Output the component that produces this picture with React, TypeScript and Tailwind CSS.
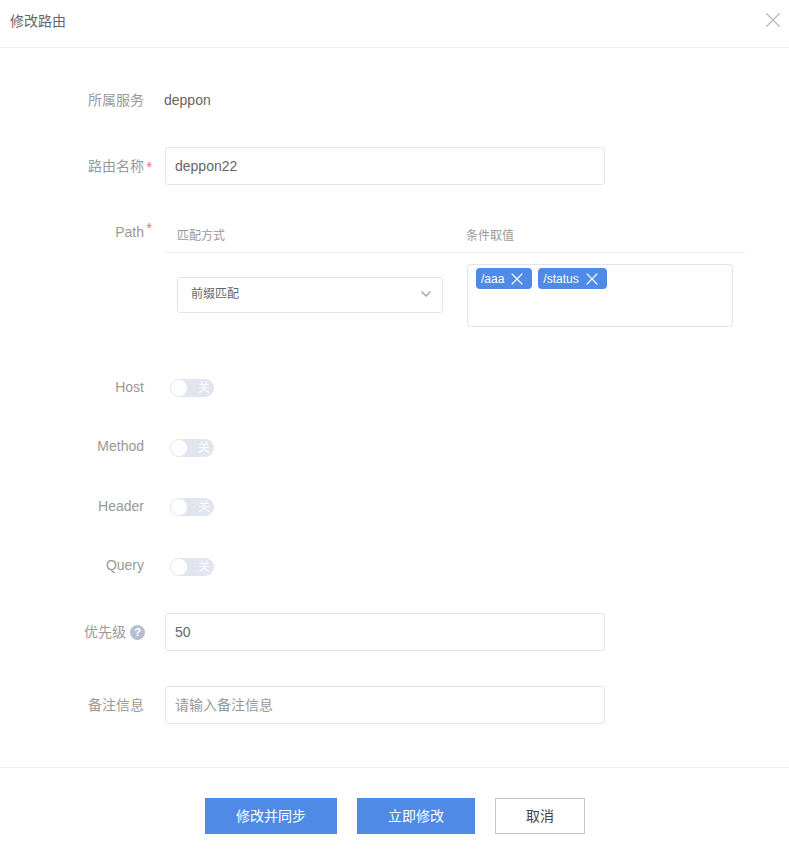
import { ChevronDown, X } from "lucide-react";
import type { ReactNode } from "react";

const font = "font-['Liberation_Sans','Noto_Sans_CJK_SC',sans-serif]";

function FormRow({
  label,
  className,
  labelClassName,
  children,
}: {
  label: ReactNode;
  className: string;
  labelClassName?: string;
  children: ReactNode;
}) {
  return (
    <div className={`flex ${className}`}>
      <div
        className={`relative flex w-[144px] shrink-0 items-center justify-end text-sm text-[#999] ${labelClassName ?? ""}`}
      >
        {label}
      </div>
      {children}
    </div>
  );
}

function Required({ className }: { className: string }) {
  return <span className={`absolute text-sm text-[#f56c6c] ${className}`}>*</span>;
}

function TextField({ value, placeholder }: { value?: string; placeholder?: string }) {
  return (
    <input
      readOnly
      value={value ?? ""}
      placeholder={placeholder}
      className="ml-[21px] h-[38px] w-[440px] rounded-[3px] border border-[#e1e5ee] bg-white px-[9px] text-sm text-[#666] outline-none placeholder:text-[#999]"
    />
  );
}

function Toggle() {
  return (
    <div className="relative ml-[26px] flex h-[18px] w-[44px] items-center justify-end rounded-full bg-[#e1e5ef] pr-[4px] text-xs leading-none text-white">
      <span className="absolute left-[1px] top-[1px] size-[16px] rounded-full bg-white" />
      关
    </div>
  );
}

function Tag({ text }: { text: string }) {
  return (
    <span className="flex h-[21px] items-center gap-[3px] rounded-[4px] bg-[#4f8ae6] pl-[5px] pr-[5px] text-xs font-medium text-white">
      {text}
      <X size={20} strokeWidth={1.3} />
    </span>
  );
}

export default function App() {
  return (
    <div className={`${font} h-[854px] w-[789px] overflow-hidden bg-white`}>
      <header className="flex h-[48px] items-center justify-between border-b border-[#f0f1f3] pl-[10px] pr-[3px] text-sm text-[#666]">
        <span className="-mt-[6px]">修改路由</span>
        <X size={26} strokeWidth={1} className="-mt-[7px] text-[#b5b5b5]" />
      </header>

      <FormRow label="所属服务" className="mt-[40px] h-[24px]">
        <span className="ml-[20px] self-center text-sm text-[#666]">deppon</span>
      </FormRow>

      <FormRow
        label={
          <>
            路由名称
            <Required className="-right-[8px] top-[10px]" />
          </>
        }
        className="mt-[35px]"
      >
        <TextField value="deppon22" />
      </FormRow>

      <FormRow
        label={
          <>
            Path
            <Required className="-right-[8px] top-[0px]" />
          </>
        }
        labelClassName="!items-start pt-[4px]"
        className="mt-[33px]"
      >
        <div className="ml-[21px] w-[580px]">
          <div className="flex h-[35px] items-center border-b border-[#eceef2] pt-[1px] text-xs text-[#999]">
            <span className="ml-[12px] w-[289px]">匹配方式</span>
            <span>条件取值</span>
          </div>
          <div className="mt-[11px] flex items-center pl-[12px]">
            <div className="-mt-[1px] flex h-[36px] w-[266px] items-center justify-between rounded-[3px] border border-[#e1e5ee] pb-[2px] pl-[13px] pr-[8px] text-xs text-[#666]">
              前缀匹配
              <ChevronDown size={16} strokeWidth={2.5} className="text-[#aaa]" />
            </div>
            <div className="ml-[24px] flex h-[63px] w-[266px] items-start gap-[6px] rounded-[3px] border border-[#e1e5ee] pl-[8px] pt-[3px]">
              <Tag text="/aaa" />
              <Tag text="/status" />
            </div>
          </div>
        </div>
      </FormRow>

      <FormRow label="Host" labelClassName="pb-[2px]" className="mt-[52px] h-[18px]">
        <Toggle />
      </FormRow>
      <FormRow label="Method" labelClassName="pb-[4px]" className="mt-[42px] h-[18px]">
        <Toggle />
      </FormRow>
      <FormRow label="Header" labelClassName="pb-[2px]" className="mt-[41px] h-[18px]">
        <Toggle />
      </FormRow>
      <FormRow label="Query" labelClassName="pb-[4px]" className="mt-[42px] h-[18px]">
        <Toggle />
      </FormRow>

      <FormRow
        label={
          <>
            优先级
            <span className="-mr-[1px] ml-[4px] flex size-[15px] items-center justify-center rounded-full bg-[#b4bfd2] text-[11px] font-bold leading-none text-white">
              ?
            </span>
          </>
        }
        className="mt-[37px]"
      >
        <TextField value="50" />
      </FormRow>

      <FormRow label="备注信息" className="mt-[35px]">
        <TextField placeholder="请输入备注信息" />
      </FormRow>

      <footer className="mt-[43px] flex justify-center gap-[20px] border-t border-[#f0f1f3] pl-[1px] pt-[30px] text-sm">
        <button className="h-[36px] w-[132px] bg-[#4f8ae6] text-white">修改并同步</button>
        <button className="h-[36px] w-[118px] bg-[#4f8ae6] text-white">立即修改</button>
        <button className="h-[36px] w-[90px] border border-[#c8c8c8] bg-white text-[#444]">取消</button>
      </footer>
    </div>
  );
}
